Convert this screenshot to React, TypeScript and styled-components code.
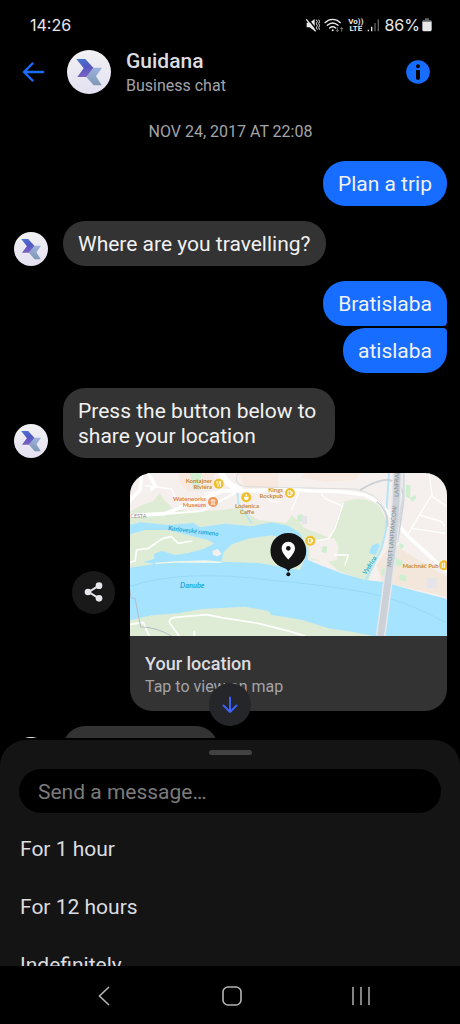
import React, { useId } from "react";
import styled, { createGlobalStyle } from "styled-components";

const color = {
  black: "#000000",
  blue: "#176dff",
  bubble: "#333333",
  sheet: "#141414",
  text: "#f1f1f1",
  textSoft: "#dcdde0",
  muted: "#a3a4a8",
  system: "#e9e9e9",
};

const GlobalStyle = createGlobalStyle`
  *, *::before, *::after { box-sizing: border-box; }
  html, body { margin: 0; background: ${color.black}; }
  body { font-family: Roboto, "Liberation Sans", sans-serif; color: ${color.text}; }
  button, input { font: inherit; color: inherit; margin: 0; border: 0; }
  button { cursor: pointer; background: none; padding: 0; }
  h1, h2, p, ul { margin: 0; padding: 0; }
  ul { list-style: none; }
  svg { display: block; }
`;

const Screen = styled.div`
  display: flex;
  flex-direction: column;
  height: 100vh;
  overflow: hidden;
`;

/* ---------- Status bar ---------- */

const StatusBar = styled.div`
  display: flex;
  align-items: center;
  justify-content: space-between;
  flex: none;
  height: 50px;
  padding: 0 28px 0 30px;
  font-family: Inter, sans-serif;
  font-size: 16px;
  line-height: 20px;
  color: ${color.system};
`;

const StatusIcons = styled.div`
  display: flex;
  align-items: center;
  gap: 4px;
`;

const Volte = styled.span`
  display: flex;
  flex-direction: column;
  align-items: center;
  font-family: Roboto, sans-serif;
  font-size: 8px;
  font-weight: 700;
  line-height: 7px;
`;

const Battery = styled.span`
  display: flex;
  align-items: center;
  gap: 2px;
`;

/* ---------- Header ---------- */

const Header = styled.header`
  display: flex;
  align-items: center;
  flex: none;
  height: 44px;
  padding: 0 30px 0 22px;
`;

const IconButton = styled.button`
  display: flex;
  flex: none;
`;

const HeaderAvatar = styled.div`
  flex: none;
  margin: 0 15px 0 22px;
`;

const Heading = styled.div`
  flex: 1;
  min-width: 0;
`;

const Name = styled.h1`
  font-size: 21px;
  font-weight: 500;
  line-height: 28px;
  color: ${color.textSoft};
`;

const Subtitle = styled.p`
  font-size: 16px;
  line-height: 22px;
  color: ${color.muted};
`;

/* ---------- Conversation ---------- */

const ChatArea = styled.main`
  position: relative;
  flex: 1;
  min-height: 0;
  overflow: hidden;
  padding: 28px 13px 0 14px;
`;

const DateLabel = styled.p`
  margin-bottom: 19px;
  text-align: center;
  font-size: 16px;
  line-height: 20px;
  color: ${color.muted};
`;

const Thread = styled.div`
  display: flex;
  flex-direction: column;
  gap: 15px;
`;

const Incoming = styled.div`
  display: flex;
  align-items: flex-end;
  gap: 15px;
`;

const Outgoing = styled.div`
  display: flex;
  flex-direction: column;
  align-items: flex-end;
  gap: 2px;
`;

type Joint = "above" | "below";

const Bubble = styled.p<{ $own?: boolean; $joint?: Joint }>`
  min-height: 45px;
  max-width: 272px;
  padding: 11px 15px 9px;
  border-radius: 22px;
  ${(p) => p.$joint === "below" && "border-bottom-right-radius: 4px;"}
  ${(p) => p.$joint === "above" && "border-top-right-radius: 4px;"}
  background: ${(p) => (p.$own ? color.blue : color.bubble)};
  font-size: 21px;
  line-height: 25px;
`;

const LoadingBubble = styled(Bubble)`
  width: 155px;
`;

const LocationRow = styled.div`
  display: flex;
  align-items: center;
  gap: 15px;
  padding-left: 58px;
`;

const ShareButton = styled.button`
  display: grid;
  place-items: center;
  flex: none;
  width: 43px;
  height: 43px;
  border-radius: 50%;
  background: #191919;
`;

const LocationCard = styled.article`
  flex: 1;
  min-width: 0;
  overflow: hidden;
  border-radius: 22px;
  background: ${color.bubble};
`;

const MapFrame = styled.div`
  svg {
    width: 100%;
    height: auto;
  }
`;

const CardBody = styled.div`
  padding: 16px 15px 13px;
`;

const CardTitle = styled.h2`
  font-size: 18px;
  font-weight: 500;
  line-height: 24px;
  color: ${color.textSoft};
`;

const ScrollDown = styled.button`
  position: absolute;
  left: 50%;
  bottom: 12px;
  display: grid;
  place-items: center;
  width: 42px;
  height: 43px;
  margin-left: -21px;
  border-radius: 50%;
  background: #242629;
`;

/* ---------- Bottom sheet ---------- */

const Sheet = styled.section`
  flex: none;
  margin-top: 2px;
  padding-top: 10px;
  border-radius: 26px 26px 0 0;
  background: ${color.sheet};
`;

const Handle = styled.div`
  width: 43px;
  height: 5px;
  margin: 0 auto;
  border-radius: 3px;
  background: #424242;
`;

const MessageInput = styled.input`
  display: block;
  width: calc(100% - 38px);
  height: 44px;
  margin: 14px 19px 7px;
  padding: 2px 19px 0;
  border-radius: 22px;
  outline: none;
  background: ${color.black};
  font-size: 21px;
  &::placeholder {
    color: #7b7b7b;
    opacity: 1;
  }
`;

const Options = styled.ul`
  max-height: 146px;
  overflow: hidden;
`;

const Option = styled.button`
  display: block;
  width: 100%;
  height: 58px;
  padding: 0 20px;
  text-align: left;
  font-size: 21px;
  color: ${color.textSoft};
`;

/* ---------- System navigation ---------- */

const NavBar = styled.nav`
  display: flex;
  align-items: center;
  justify-content: space-between;
  flex: none;
  height: 58px;
  padding: 2px 19% 0 20%;
`;

const NavButton = styled.button`
  display: grid;
  place-items: center;
  width: 24px;
  height: 24px;
`;

/* ---------- Drawings ---------- */

function Logo({ size }: { size: number }) {
  const id = useId().replace(/[^a-zA-Z0-9]/g, "");
  return (
    <svg width={size} height={size} viewBox="0 0 132 132" aria-hidden="true">
      <defs>
        <linearGradient id={`${id}bg`} x1="0" y1="0" x2="0" y2="1">
          <stop offset="0" stopColor="#f2f1f3" />
          <stop offset="1" stopColor="#e3e1f1" />
        </linearGradient>
        <linearGradient id={`${id}a`} x1="0" y1="0" x2="0.3" y2="1">
          <stop offset="0" stopColor="#4a78cf" />
          <stop offset="0.55" stopColor="#5158c4" />
          <stop offset="1" stopColor="#7b62c0" />
        </linearGradient>
        <linearGradient id={`${id}b`} x1="0" y1="0" x2="0" y2="1">
          <stop offset="0" stopColor="#9db4df" />
          <stop offset="1" stopColor="#7d97b4" />
        </linearGradient>
      </defs>
      <circle cx="66" cy="66" r="66" fill={`url(#${id}bg)`} />
      <path d="M76 53H105L87 79L104 106H80L58 81Z" fill={`url(#${id}b)`} />
      <path d="M28 27H55L79 53L58 81H31L50 55Z" fill={`url(#${id}a)`} />
    </svg>
  );
}

function MuteIcon() {
  return (
    <svg width="14" height="14" viewBox="0 0 42 42" fill="none" aria-hidden="true">
      <path d="M2 14H11L26 3V39L11 28H2Z" fill={color.system} />
      <path d="M4 0L32 36" stroke="#000" strokeWidth="4" />
      <path d="M1 4L29 40" stroke={color.system} strokeWidth="4" />
      <path d="M31 5l3 6-3 6 3 6-3 6 3 6M38 5l3 6-3 6 3 6-3 6 3 6" stroke={color.system} strokeWidth="3" />
    </svg>
  );
}

function WifiIcon() {
  return (
    <svg width="20" height="15" viewBox="0 0 60 45" fill="none" aria-hidden="true">
      <g stroke={color.system} strokeWidth="4" strokeLinecap="round">
        <path d="M3 14C17 1 35 1 49 14" />
        <path d="M10 22C20 13 32 13 42 22" />
        <path d="M17 30C23 25 29 25 35 30" />
      </g>
      <circle cx="26" cy="37" r="3" fill={color.system} />
      <path d="M40 28V40M36 36l4 5 4-5M53 41V29M49 33l4-5 4 5" stroke="#777" strokeWidth="3" />
    </svg>
  );
}

function SignalIcon() {
  return (
    <svg width="13" height="14" viewBox="0 0 39 42" aria-hidden="true">
      <path d="M2 35h4v5H2zM12 26h4v14h-4z" fill={color.system} />
      <path d="M22 15h4v25h-4zM32 4h4v36h-4z" fill="#606060" />
    </svg>
  );
}

function BatteryIcon() {
  return (
    <svg width="10" height="14" viewBox="0 0 30 42" aria-hidden="true">
      <path d="M9 1h12v5h4q4 0 4 4v3H1v-3q0-4 4-4h4z" fill="#666" />
      <path d="M1 11h28v24q0 5-5 5H6q-5 0-5-5z" fill={color.system} />
    </svg>
  );
}

function InfoIcon() {
  return (
    <svg width="24" height="24" viewBox="0 0 72 72" aria-hidden="true">
      <circle cx="36" cy="36" r="35.500" fill={color.blue} />
      <circle cx="36" cy="19" r="6" />
      <path d="M30 30h9q3 0 3 3v22q0 4-4 4h-4q-4 0-4-4z" />
    </svg>
  );
}

function MapPicture() {
  const gold = "#c98a2b";
  return (
    <svg viewBox="15 24 951 489" role="img" aria-label="Map of the Danube near Most Lanfranconi">
      <rect x="15" y="24" width="951" height="489" fill="#f5f0ed" />
      <path d="M160 24H270L260 70 190 80 165 55ZM340 24H460V72L360 66ZM540 24H710L690 44 600 50 530 38Z" fill="#f7e9df" />
      <path d="M800 235L905 300 966 335V395L770 350 755 300Z" fill="#f3e7dc" />

      {/* parkland */}
      <path d="M15 140Q50 118 85 108L104 84 118 106 146 132 200 140 290 135 340 128 400 165 495 175V330H15Z" fill="#dfecd5" />
      <path d="M195 24H230L222 75 205 72Z" fill="#d2eed3" />
      <path d="M655 110Q720 88 765 125L786 175 782 215 760 275 728 350 640 318 610 290 560 285 480 180 500 150 540 190 615 218Z" fill="#dfecd5" />
      <path d="M552 245L575 225 628 220 640 245 636 285 600 292 556 278Z" fill="#f5f0ed" />

      {/* river */}
      <path
        d="M15 180L45 172 130 180 205 174 225 187 300 176 380 184 440 172 490 182 525 205 545 250 550 285 590 302 650 325 720 345 780 352 850 372 966 402V513H15V308L90 297 55 291 88 281 86 268 110 257 150 270 190 264 235 252 268 236 250 225 200 213 130 195 60 195 15 208Z"
        fill="#a5e3ff"
      />
      <path d="M289 290L296 262 320 238 370 221 440 211 500 225 540 280 525 315 470 306 400 294Z" fill="#dfecd5" />
      <path d="M90 293L150 289 240 286 290 290V294L150 293 92 297Z" fill="#eef5ea" />
      <path d="M262 258L278 252 290 266 278 274 264 270Z" fill="#f5f0ed" />
      <path d="M15 466L80 451 160 445 230 432 360 425 430 438 440 450 495 458 535 466 610 490 680 500 745 513H15Z" fill="#dfecd5" />
      <path d="M15 364Q90 338 200 333T440 346Q600 360 720 382T966 475" stroke="#8fcfeb" strokeWidth="1.500" fill="none" />
      <path d="M732 265L740 242 760 234 764 242 752 270Z" fill="#a5e3ff" />
      <path d="M792 24L785 130 784 190 770 250 722 345" stroke="#b7e5f8" strokeWidth="6" fill="none" />
      <path d="M336 60L340 115 380 175" stroke="#b7e5f8" strokeWidth="5" fill="none" />

      {/* green plots */}
      <path d="M843 58L857 62 855 100 842 95ZM855 100L870 90 874 98 862 110ZM518 150L534 148 530 172 516 168ZM800 270L835 290 825 305 795 290ZM770 310L790 312 788 335 768 330ZM825 328L845 332 843 350 822 345ZM592 245L606 244 604 265 590 262ZM825 235L838 241 830 252 820 245Z" fill="#cdefd0" />
      <path d="M530 153h16v24h-16zM905 340h30v30h-30z" fill="#e5e4e8" />

      {/* streets */}
      <g fill="none" stroke="#ffffff" strokeLinejoin="round" strokeLinecap="round">
        <path d="M15 106L45 75 50 24M70 24L90 62 80 72M15 152L120 146 190 118 290 78 400 77 495 72 560 78 650 80 720 90 760 110 800 155 850 215 966 320" strokeWidth="11" />
        <path d="M120 147L230 138 260 122 330 84" strokeWidth="6" />
        <path d="M290 24Q300 55 345 75" strokeWidth="18" />
        <path d="M62 62L140 72 150 95M270 80L240 85M410 85L440 110 470 110M495 78L520 85 500 135M590 88L600 100 650 122M655 115L630 190 612 220 560 230M912 24L922 95 966 125M920 90L880 155 845 215M885 150L950 170 958 182M860 190L960 205M630 270H670L660 300" strokeWidth="4" />
        <path d="M15 292L30 288 35 255 70 250 110 222 138 214 160 235 200 228" strokeWidth="5" />
        <path d="M162 512L134 474Q130 460 150 457L245 449 290 458 400 475 495 499 540 513M15 478L55 472 72 512M208 513V500" strokeWidth="5" />
      </g>
      <path d="M15 375L18 398 30 400 47 486Q90 485 140 513" fill="none" stroke="#b4bec8" strokeWidth="3" />
      <path d="M340 24Q320 55 360 65L690 72Q755 85 780 130" fill="none" stroke="#cbd1d6" strokeWidth="2" />
      <path d="M705 75Q755 45 790 44Q845 60 834 120L818 230M755 110Q790 135 788 185" fill="none" stroke="#cbd1d8" strokeWidth="5" />

      {/* bridge */}
      <path d="M817 24Q812 190 794 310L767 513" fill="none" stroke="#e5e8eb" strokeWidth="29" />
      <path d="M817 24Q812 190 794 310L767 513" fill="none" stroke="#cbd1d7" strokeWidth="20" />
      <path d="M836 24V90L815 200" fill="none" stroke="#d5dade" strokeWidth="6" />

      {/* place markers */}
      <g fill="#efc02e">
        <circle cx="281" cy="56" r="15" />
        <circle cx="364" cy="97" r="15" />
        <circle cx="495" cy="84" r="15" />
        <circle cx="556" cy="227" r="15" />
        <circle cx="957" cy="301" r="15" />
      </g>
      <circle cx="264" cy="111" r="15" fill="#f0965a" />
      <g fill="none" stroke="#fff" strokeWidth="3">
        <path d="M276 48V55L279 58V65M286 48V65M283 48V56M489 78h9v13h-9zM498 81h4v6h-4M550 221h9v13h-9zM559 224h4v6h-4M952 293v16M958 293v16" />
        <path d="M257 107l7-4 7 4zM257 118h15M260 108v9M264 108v9M268 108v9" strokeWidth="2" />
      </g>
      <path d="M357 95h14q0 10-7 10t-7-10zM362 88h4v5h-4z" fill="#fff" />

      {/* labels */}
      <g fontFamily="Lato, sans-serif" fontSize="18" fontWeight="700" fill={gold}>
        <text x="261" y="55" textAnchor="end">Kontajner</text>
        <text x="261" y="73" textAnchor="end">Riviéra</text>
        <text x="474" y="81" textAnchor="end">Kings</text>
        <text x="474" y="99" textAnchor="end">Rockpub</text>
        <text x="366" y="128" textAnchor="middle">Lodenica</text>
        <text x="366" y="146" textAnchor="middle">Caffe</text>
        <text x="941" y="308" textAnchor="end">Machnáč Pub</text>
        <g fill="#e57f45">
          <text x="243" y="109" textAnchor="end">Waterworks</text>
          <text x="243" y="127" textAnchor="end">Museum</text>
        </g>
      </g>
      <g fontFamily="Lato, sans-serif" fontStyle="italic" fontWeight="700" fill="#27a9cf">
        <text x="165" y="370" fontSize="22">Danube</text>
        <text x="129" y="195" fontSize="19" transform="rotate(7 129 195)">Karloveské rameno</text>
        <text x="722" y="330" fontSize="19" transform="rotate(-57 722 330)">Vydrica</text>
      </g>
      <g fontFamily="Lato, sans-serif" fontSize="16" fill="#84898f">
        <text x="16" y="160">CESTA</text>
        <text x="799" y="306" fontSize="18" transform="rotate(-85 799 306)">MOST LANFRANCONI</text>
        <text x="820" y="96" fontSize="18" transform="rotate(-88 820 96)">LANFRAN</text>
      </g>

      {/* current position */}
      <path d="M490 204a53 53 0 0 1 15 104q-10 2-15 12q-5-10-15-12A53 53 0 0 1 490 204Z" fill="#141414" />
      <circle cx="490" cy="328" r="6" fill="#141414" />
      <path d="M490 230c-12 0-20 9-20 20 0 15 20 34 20 34s20-19 20-34c0-11-8-20-20-20zm0 13a7 7 0 1 1 0 14 7 7 0 0 1 0-14z" fill="#fff" fillRule="evenodd" />
    </svg>
  );
}

const options = ["For 1 hour", "For 12 hours", "Indefinitely"];

export default function App() {
  return (
    <Screen>
      <GlobalStyle />
      <StatusBar>
        <span>14:26</span>
        <StatusIcons>
          <MuteIcon />
          <WifiIcon />
          <Volte>
            <span>Vo))</span>
            <span>LTE</span>
          </Volte>
          <SignalIcon />
          <Battery>
            86%
            <BatteryIcon />
          </Battery>
        </StatusIcons>
      </StatusBar>

      <Header>
        <IconButton aria-label="Back">
          <svg width="23" height="20" viewBox="0 0 23 20" fill="none" stroke={color.blue} strokeWidth="2.400" strokeLinecap="round" strokeLinejoin="round">
            <path d="M21 10H2M10.500 1.500L2 10l8.500 8.500" />
          </svg>
        </IconButton>
        <HeaderAvatar>
          <Logo size={44} />
        </HeaderAvatar>
        <Heading>
          <Name>Guidana</Name>
          <Subtitle>Business chat</Subtitle>
        </Heading>
        <IconButton aria-label="Chat details">
          <InfoIcon />
        </IconButton>
      </Header>

      <ChatArea>
        <DateLabel>NOV 24, 2017 AT 22:08</DateLabel>
        <Thread>
          <Outgoing>
            <Bubble $own>Plan a trip</Bubble>
          </Outgoing>
          <Incoming>
            <Logo size={34} />
            <Bubble>Where are you travelling?</Bubble>
          </Incoming>
          <Outgoing>
            <Bubble $own $joint="below">Bratislaba</Bubble>
            <Bubble $own $joint="above">atislaba</Bubble>
          </Outgoing>
          <Incoming>
            <Logo size={34} />
            <Bubble>Press the button below to share your location</Bubble>
          </Incoming>
          <LocationRow>
            <ShareButton aria-label="Share location">
              <svg width="20" height="20" viewBox="0 0 60 60" fill="#e4e6e9" stroke="#e4e6e9" aria-hidden="true">
                <path d="M45 11L14 30l31 19" fill="none" strokeWidth="6" />
                <circle cx="45" cy="11" r="10" stroke="none" />
                <circle cx="12" cy="30" r="10" stroke="none" />
                <circle cx="45" cy="49" r="10" stroke="none" />
              </svg>
            </ShareButton>
            <LocationCard>
              <MapFrame>
                <MapPicture />
              </MapFrame>
              <CardBody>
                <CardTitle>Your location</CardTitle>
                <Subtitle>Tap to view on map</Subtitle>
              </CardBody>
            </LocationCard>
          </LocationRow>
          <Incoming>
            <Logo size={34} />
            <LoadingBubble />
          </Incoming>
        </Thread>
        <ScrollDown aria-label="Scroll to latest">
          <svg width="16" height="18" viewBox="0 0 16 18" fill="none" stroke="#3f62f5" strokeWidth="2" strokeLinecap="round" strokeLinejoin="round">
            <path d="M8 1.500V16M1.500 9.500L8 16l6.500-6.500" />
          </svg>
        </ScrollDown>
      </ChatArea>

      <Sheet aria-label="Message options">
        <Handle />
        <MessageInput type="text" aria-label="Message" placeholder="Send a message…" />
        <Options>
          {options.map((label) => (
            <li key={label}>
              <Option>{label}</Option>
            </li>
          ))}
        </Options>
      </Sheet>

      <NavBar aria-label="System">
        <NavButton aria-label="Back">
          <svg width="12" height="20" viewBox="0 0 12 20" fill="none" stroke="#b4b4b4" strokeWidth="1.600">
            <path d="M11 1L1.500 10 11 19" />
          </svg>
        </NavButton>
        <NavButton aria-label="Home">
          <svg width="20" height="20" viewBox="0 0 20 20" fill="none" stroke="#b4b4b4" strokeWidth="1.600">
            <rect x="1" y="1" width="18" height="18" rx="5" />
          </svg>
        </NavButton>
        <NavButton aria-label="Recent apps">
          <svg width="18" height="18" viewBox="0 0 18 18" stroke="#a4a4a4" strokeWidth="1.600">
            <path d="M1 0v18M9 0v18M17 0v18" />
          </svg>
        </NavButton>
      </NavBar>
    </Screen>
  );
}
